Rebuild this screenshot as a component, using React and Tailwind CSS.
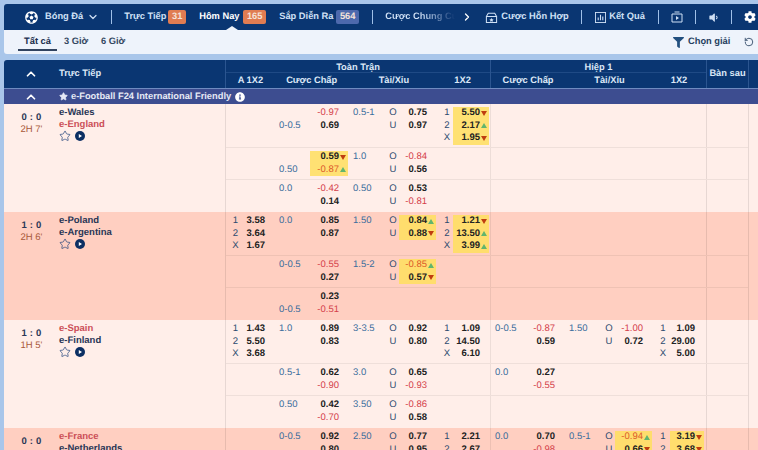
import React from 'react'
import { ChevronDown, ChevronRight, ChevronUp, RotateCcw, Star } from 'lucide-react'
import { FaCog, FaFilter, FaFutbol, FaInfoCircle, FaVolumeDown } from 'react-icons/fa'

const widths = ['w-[49px]', 'w-[74px]', 'w-[87px]', 'w-[55px]', 'w-[74px]', 'w-[87px]', 'w-[54px]']

const matches = [
  {
    score: '0 : 0', time: "2H 7'", home: 'e-Wales', away: 'e-England', red: 'away', bg: 'bg-[#ffeee9]',
    rows: [
      { h: 44, hdp: ['', '0-0.5', '-0.97', '0.69'], ou: ['0.5-1', '0.75', '0.97'], x12: ['5.50 d', '2.17 u', '1.95 d'] },
      { h: 32, hdp: ['', '0.50', '0.59 d', '-0.87 u'], ou: ['1.0', '-0.84', '0.56'] },
      { h: 32, hdp: ['0.0', '', '-0.42', '0.14'], ou: ['0.50', '0.53', '-0.81'] },
    ],
  },
  {
    score: '1 : 0', time: "2H 6'", home: 'e-Poland', away: 'e-Argentina', bg: 'bg-[#ffcfc1]',
    rows: [
      { h: 44, a: ['3.58', '3.64', '1.67'], hdp: ['0.0', '', '0.85', '0.87'], ou: ['1.50', '0.84 u', '0.88 d'], x12: ['1.21 d', '13.50 u', '3.99 u'] },
      { h: 32, hdp: ['0-0.5', '', '-0.55', '0.27'], ou: ['1.5-2', '-0.85 u', '0.57 d'] },
      { h: 32, hdp: ['', '0-0.5', '0.23', '-0.51'] },
    ],
  },
  {
    score: '1 : 0', time: "1H 5'", home: 'e-Spain', away: 'e-Finland', red: 'home', bg: 'bg-[#ffeee9]',
    rows: [
      {
        h: 44, a: ['1.43', '5.50', '3.68'], hdp: ['1.0', '', '0.89', '0.83'], ou: ['3-3.5', '0.92', '0.80'], x12: ['1.09', '14.50', '6.10'],
        hdp1: ['0-0.5', '', '-0.87', '0.59'], ou1: ['1.50', '-1.00', '0.72'], x121: ['1.09', '29.00', '5.00'],
      },
      { h: 32, hdp: ['0.5-1', '', '0.62', '-0.90'], ou: ['3.0', '0.65', '-0.93'], hdp1: ['0.0', '', '0.27', '-0.55'] },
      { h: 32, hdp: ['0.50', '', '0.42', '-0.70'], ou: ['3.50', '-0.86', '0.58'] },
    ],
  },
  {
    score: '0 : 0', time: '', home: 'e-France', away: 'e-Netherlands', red: 'home', bg: 'bg-[#ffcfc1]',
    rows: [
      {
        h: 44, hdp: ['0-0.5', '', '0.92', '0.80'], ou: ['2.50', '0.77', '0.95'], x12: ['2.21', '2.67'],
        hdp1: ['0.0', '', '0.70', '-0.98'], ou1: ['0.5-1', '-0.94 u', '0.66 d'], x121: ['3.19 d', '3.68 d'],
      },
    ],
  },
]

const Odd = ({ value }) => {
  if (!value) return <div className="h-[12.5px]" />
  const [num, dir] = value.split(' ')
  const neg = num.startsWith('-')
  let arrow = <span className="w-[7px] shrink-0" />
  if (dir === 'u') {
    arrow = <span className="w-[7px] shrink-0 flex justify-end"><span className="border-x-[3px] border-x-transparent border-b-[5px] border-b-[#62b56e]" /></span>
  }
  if (dir === 'd') {
    arrow = <span className="w-[7px] shrink-0 flex justify-end"><span className="border-x-[3px] border-x-transparent border-t-[5px] border-t-[#bf3d10]" /></span>
  }
  return (
    <div className={`h-[12.5px] flex items-center justify-end pr-[2px] ${dir ? 'bg-[#ffdf5e]/85' : ''}`}>
      <span className={neg ? (dir ? 'text-[#dc5a2a]' : 'text-[#d4404a]') : 'text-[#222222] font-bold'}>{num}</span>
      {arrow}
    </div>
  )
}

const Line = ({ children }) => (
  <div className="h-[12.5px] flex items-center text-[#3a6d9c]">{children}</div>
)

const Label = ({ children }) => (
  <div className="h-[12.5px] flex items-center justify-center text-[#2c4a6e]">{children}</div>
)

const ThreeWay = ({ values, labelW, valueW }) => {
  if (!values) return null
  return (
    <div className="flex pt-[3px]">
      <div className={labelW}>
        {['1', '2', 'X'].map((l) => <Label key={l}>{l}</Label>)}
      </div>
      <div className={valueW}>
        {values.map((v) => <Odd key={v} value={v} />)}
      </div>
    </div>
  )
}

const Handicap = ({ data }) => {
  if (!data) return null
  return (
    <div className="flex pt-[3px]">
      <div className="w-[35px] pl-[4px]">
        <Line>{data[0]}</Line>
        <Line>{data[1]}</Line>
      </div>
      <div className="w-[38px]">
        <Odd value={data[2]} />
        <Odd value={data[3]} />
      </div>
    </div>
  )
}

const OverUnder = ({ data }) => {
  if (!data) return null
  return (
    <div className="flex pt-[3px]">
      <div className="w-[38px] pl-[4px]">
        <Line>{data[0]}</Line>
      </div>
      <div className="w-[12px]">
        <Label>O</Label>
        <Label>U</Label>
      </div>
      <div className="w-[37px]">
        <Odd value={data[1]} />
        <Odd value={data[2]} />
      </div>
    </div>
  )
}

const SubRow = ({ row, last }) => {
  const cells = [
    <ThreeWay values={row.a} labelW="w-[19px]" valueW="w-[29px]" />,
    <Handicap data={row.hdp} />,
    <OverUnder data={row.ou} />,
    <ThreeWay values={row.x12} labelW="w-[17px] pl-[5px]" valueW="w-[36px]" />,
    <Handicap data={row.hdp1} />,
    <OverUnder data={row.ou1} />,
    <ThreeWay values={row.x121} labelW="w-[18px] pl-[4px]" valueW="w-[34px]" />,
  ]
  return (
    <div className={`flex ${last ? '' : 'border-b border-[#00000010]'}`} style={{ height: row.h }}>
      {cells.map((c, i) => (
        <div key={i} className={`${widths[i]} shrink-0 ${i === 3 ? 'border-r border-[#00000012]' : ''}`}>{c}</div>
      ))}
      <div className="w-[42px] shrink-0 border-l border-[#00000018]" />
    </div>
  )
}

const Match = ({ m }) => (
  <div className={`flex ${m.bg}`}>
    <div className="w-[222px] shrink-0 flex border-r border-[#00000018]">
      <div className="w-[55px] shrink-0 text-center pt-[7px]">
        <div className="h-[13px] leading-[13px] font-bold text-[#2a3756] tracking-[0.2px]">{m.score}</div>
        <div className="h-[12px] leading-[12px] text-[#a9593a]">{m.time}</div>
      </div>
      <div>
        <div className={`h-[11.5px] leading-[11.5px] mt-[3px] font-bold ${m.red === 'home' ? 'text-[#cc5058]' : 'text-[#2a3756]'}`}>{m.home}</div>
        <div className={`h-[11.5px] leading-[11.5px] font-bold ${m.red === 'away' ? 'text-[#cc5058]' : 'text-[#2a3756]'}`}>{m.away}</div>
        <div className="flex items-center gap-[4px]">
          <Star size={12} strokeWidth={1.4} className="text-[#1d3f78]" />
          <svg width="10" height="10" viewBox="0 0 10 10">
            <circle cx="5" cy="5" r="5" fill="#0c2f63" />
            <path d="M3.8 3 L7 5 L3.8 7 Z" fill="#fff" />
          </svg>
        </div>
      </div>
    </div>
    <div className="flex-1 flex flex-col">
      {m.rows.map((r, i) => <SubRow key={i} row={r} last={i === m.rows.length - 1} />)}
    </div>
    <div className="w-[10px] shrink-0 border-l border-[#00000018]" />
  </div>
)

const NavDivider = ({ ml }) => <div className={`w-px h-[14px] bg-[#9fc0e8] shrink-0 ${ml}`} />

const Badge = ({ color, children, w, ml }) => (
  <span className={`${color} ${w} ${ml} h-[14px] rounded-[2px] shrink-0 flex items-center justify-center text-[9.3px] text-[#f5e3da]`}>
    {children}
  </span>
)

const App = () => {
  return (
    <div className="h-[450px] w-[758px] overflow-hidden bg-[#a9c6ea] pt-[4px] pl-[4px] text-[9.5px] [text-rendering:geometricPrecision] font-['Liberation_Sans',Arial,sans-serif]">
      {/* thanh menu */}
      <div className="relative h-[26px] bg-[#0a3672] rounded-tl-[3px] flex items-center text-[#cfe0f5] font-bold text-[9.3px] whitespace-nowrap overflow-hidden">
        <FaFutbol size={13} className="text-white ml-[21px] shrink-0" />
        <span className="ml-[7px]">Bóng Đá</span>
        <ChevronDown size={12} strokeWidth={2.4} className="ml-[4px] shrink-0" />
        <NavDivider ml="ml-[12px]" />
        <span className="ml-[12px] w-[42px] shrink-0">Trực Tiếp</span>
        <Badge color="bg-[#e07c52]" w="w-[18px]" ml="ml-[2px]">31</Badge>
        <span className="ml-[13px] w-[40px] shrink-0 text-white">Hôm Nay</span>
        <Badge color="bg-[#e07c52]" w="w-[23px]" ml="ml-[4px]">165</Badge>
        <span className="ml-[13px] w-[55px] shrink-0">Sắp Diễn Ra</span>
        <Badge color="bg-[#4d69ad]" w="w-[23px]" ml="ml-[2px]">564</Badge>
        <NavDivider ml="ml-[13px]" />
        <span className="ml-[12px] w-[70px] shrink-0 overflow-hidden bg-gradient-to-r from-[#cfe0f5] via-[#cfe0f5] to-[#0a3672] bg-clip-text text-transparent">Cược Chung Cuộc</span>
        <ChevronRight size={12} strokeWidth={2.6} className="ml-[6px] text-white shrink-0" />
        <svg width="13" height="13" viewBox="0 0 14 14" fill="none" stroke="#cfe0f5" strokeWidth="1.1" className="ml-[12px] shrink-0">
          <path d="M1.5 6 H12.5 V12.5 H1.5 Z M1.5 6 L3.5 2.5 H10.5 L12.5 6" />
          <path d="M7 7.5 l.8 1.5 1.5.2 -1.1 1 .3 1.5 -1.5-.7 -1.5.7 .3-1.5 -1.1-1 1.5-.2 Z" fill="#cfe0f5" stroke="none" />
        </svg>
        <span className="ml-[3px] w-[68px] shrink-0">Cược Hỗn Hợp</span>
        <NavDivider ml="ml-[12px]" />
        <svg width="11" height="11" viewBox="0 0 12 12" fill="none" stroke="#cfe0f5" className="ml-[13px] shrink-0">
          <rect x="0.5" y="0.5" width="11" height="11" />
          <path d="M3.5 9 V6 M6 9 V3 M8.5 9 V5" strokeWidth="1.2" />
        </svg>
        <span className="ml-[3px] w-[36px] shrink-0">Kết Quả</span>
        <NavDivider ml="ml-[13px]" />
        <svg width="12" height="12" viewBox="0 0 12 12" fill="none" stroke="#cfe0f5" className="ml-[12px] shrink-0">
          <path d="M1 3 H11 V11 H1 Z M3.5 1 H8.5" />
          <path d="M5 5 L8 7 L5 9 Z" fill="#cfe0f5" stroke="none" />
        </svg>
        <NavDivider ml="ml-[12px]" />
        <FaVolumeDown size={11} className="ml-[12px] shrink-0" />
        <NavDivider ml="ml-[12px]" />
        <FaCog size={12} className="ml-[12px] shrink-0 text-white" />
        <div className="absolute left-[222px] bottom-0 w-0 h-0 border-x-[6px] border-x-transparent border-b-[4px] border-b-[#eef3fb]" />
      </div>

      {/* thanh lọc */}
      <div className="h-[24px] bg-[#eef3fb] rounded-bl-[3px] flex items-center font-bold text-[#33475f] text-[9.3px] whitespace-nowrap">
        <div className="relative ml-[14px] w-[39px] h-full flex items-center justify-center">
          <span className="text-[#1b2f4e]">Tất cả</span>
          <div className="absolute bottom-[3px] left-0 right-0 h-[2px] bg-[#31435f]" />
        </div>
        <span className="ml-[7px] w-[24px] shrink-0">3 Giờ</span>
        <span className="ml-[13px] w-[24px] shrink-0">6 Giờ</span>
        <FaFilter size={11} className="ml-[548px] text-[#23507f] shrink-0" />
        <span className="ml-[4px] w-[44px] shrink-0 text-[#26405f]">Chọn giải</span>
        <RotateCcw size={10} strokeWidth={2} className="ml-[12px] text-[#26405f] shrink-0" />
      </div>

      {/* đầu bảng */}
      <div className="mt-[6px] h-[28px] bg-[#0a3672] rounded-tl-[3px] flex text-[#dbe7f6] font-bold text-[9.3px] whitespace-nowrap">
        <div className="w-[222px] shrink-0 flex items-center border-r border-[#2b5590]">
          <ChevronUp size={14} strokeWidth={3} className="ml-[20px] text-white" />
          <span className="ml-[21px]">Trực Tiếp</span>
        </div>
        <div className="w-[265px] shrink-0 flex flex-col border-r border-[#2b5590]">
          <div className="h-[13px] leading-[14px] text-center border-b border-[#1f4a85]">Toàn Trận</div>
          <div className="flex-1 flex items-center text-center">
            <div className="w-[49px]">A 1X2</div>
            <div className="w-[74px]">Cược Chấp</div>
            <div className="w-[87px] pl-[4px]">Tài/Xỉu</div>
            <div className="w-[55px]">1X2</div>
          </div>
        </div>
        <div className="w-[215px] shrink-0 flex flex-col">
          <div className="h-[13px] leading-[14px] text-center border-b border-[#1f4a85]">Hiệp 1</div>
          <div className="flex-1 flex items-center text-center">
            <div className="w-[74px]">Cược Chấp</div>
            <div className="w-[87px] pl-[2px]">Tài/Xỉu</div>
            <div className="w-[54px]">1X2</div>
          </div>
        </div>
        <div className="w-[42px] shrink-0 flex items-center justify-center border-l border-[#2b5590]">Bàn sau</div>
        <div className="w-[10px] shrink-0 border-l border-[#2b5590]" />
      </div>

      {/* giải đấu */}
      <div className="h-[16px] bg-[#3d4d90] flex items-center text-[#e6e9f5] font-bold text-[9.3px] whitespace-nowrap border-t border-[#6f8bc0]">
        <ChevronUp size={14} strokeWidth={3} className="ml-[20px] text-white shrink-0" />
        <Star size={9} fill="#e6e9f5" className="ml-[21px] shrink-0" />
        <span className="ml-[3px]">e-Football F24 International Friendly</span>
        <FaInfoCircle size={10} className="ml-[4px] text-white shrink-0" />
      </div>

      {matches.map((m) => <Match key={m.home} m={m} />)}
    </div>
  )
}

export default App
